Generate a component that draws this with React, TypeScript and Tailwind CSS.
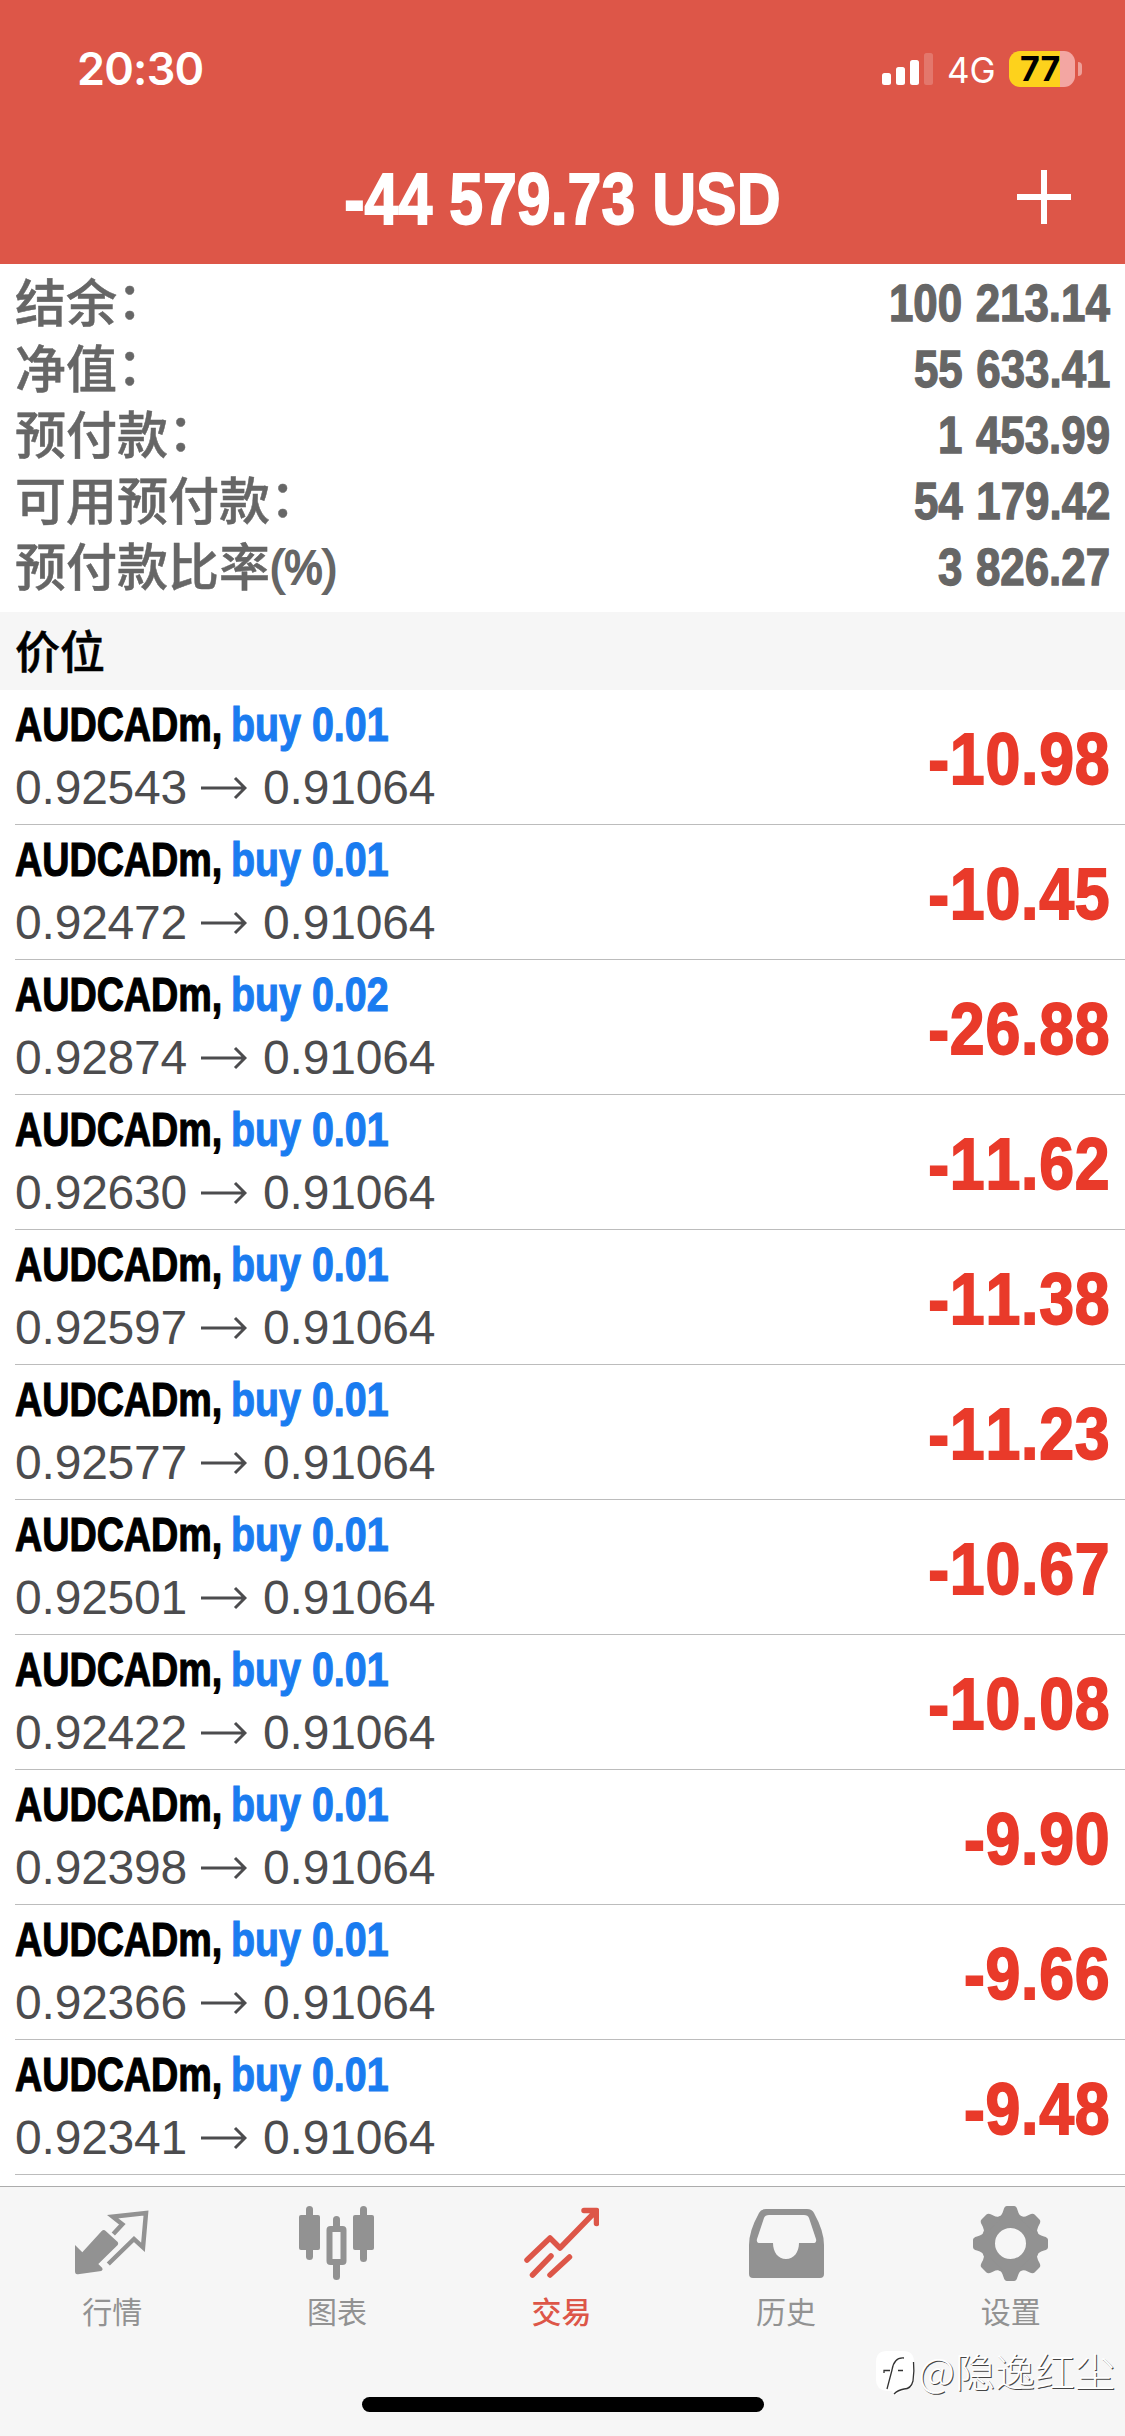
import type { ReactNode } from "react";

const summary = [
  { label: "结余", suffix: "：", value: "100 213.14" },
  { label: "净值", suffix: "：", value: "55 633.41" },
  { label: "预付款", suffix: "：", value: "1 453.99" },
  { label: "可用预付款", suffix: "：", value: "54 179.42" },
  { label: "预付款比率", suffix: "(%)", value: "3 826.27" },
];

const positions = [
  { volume: "0.01", open: "0.92543", profit: "-10.98" },
  { volume: "0.01", open: "0.92472", profit: "-10.45" },
  { volume: "0.02", open: "0.92874", profit: "-26.88" },
  { volume: "0.01", open: "0.92630", profit: "-11.62" },
  { volume: "0.01", open: "0.92597", profit: "-11.38" },
  { volume: "0.01", open: "0.92577", profit: "-11.23" },
  { volume: "0.01", open: "0.92501", profit: "-10.67" },
  { volume: "0.01", open: "0.92422", profit: "-10.08" },
  { volume: "0.01", open: "0.92398", profit: "-9.90" },
  { volume: "0.01", open: "0.92366", profit: "-9.66" },
  { volume: "0.01", open: "0.92341", profit: "-9.48" },
];

const StatusBar = () => (
  <div className="flex h-[138px] items-start justify-between pr-[43px] pl-[77px] font-['Inter',sans-serif]">
    <span className="mt-[41px] text-[45px] leading-[56px] font-semibold tracking-[-0.8px]">
      20:30
    </span>
    <div className="mt-[51px] flex h-9 items-center">
      <svg width="51" height="36" viewBox="0 0 51 36" fill="#fff">
        <rect x="0" y="22" width="9" height="12" rx="2.5" />
        <rect x="14" y="16" width="9" height="18" rx="2.5" />
        <rect x="28" y="9" width="9" height="25" rx="2.5" />
        <rect x="42" y="2" width="9" height="32" rx="2.5" opacity="0.2" />
      </svg>
      <span className="mt-px ml-[14px] w-[62px] text-[35px] leading-9">4G</span>
      <div className="flex h-9 w-[66px] items-center rounded-[11px] bg-linear-to-r from-[#fdd21c] from-77% to-[#f3a6a2] to-77% pl-[11px]">
        <span className="text-[34px] leading-9 font-bold text-black">77</span>
      </div>
      <div className="ml-[3px] h-[14px] w-1 rounded-r-full bg-[#ee9f98]" />
    </div>
  </div>
);

const Header = () => (
  <header className="h-[264px] bg-[#dd5648] text-white">
    <StatusBar />
    <div className="grid h-[126px] grid-cols-[108px_1fr_108px] items-start">
      <div />
      <h1 className="mt-[21px] origin-center scale-x-[0.845] text-center text-[72px] leading-[80px] font-bold whitespace-nowrap [-webkit-text-stroke:1.8px_#fff]">
        -44 579.73 USD
      </h1>
      <svg className="mt-8" width="54" height="54" viewBox="0 0 54 54">
        <path d="M27 0v54M0 27h54" stroke="#fff" strokeWidth="6" />
      </svg>
    </div>
  </header>
);

const Summary = () => (
  <section className="px-[15px] pt-1.5 pb-3 text-[#666]">
    {summary.map((s) => (
      <div key={s.label} className="flex h-[66px] items-start justify-between">
        <div className="-mt-[3px] flex font-['Noto_Sans_CJK_SC',sans-serif] text-[51px] leading-[66px] font-medium [-webkit-text-stroke:0.5px_#666]">
          <span>{s.label}</span>
          {s.suffix === "(%)" ? (
            <span className="mt-[3px] origin-left scale-x-[0.88] font-['Liberation_Sans',sans-serif] text-[49px] [-webkit-text-stroke:2px_#666]">
              {s.suffix}
            </span>
          ) : (
            <span className="-mt-[3px]">{s.suffix}</span>
          )}
        </div>
        <span className="mt-px origin-right scale-x-[0.86] text-[51px] leading-[66px] font-bold [word-spacing:0.03em] [font-kerning:none] [-webkit-text-stroke:1.3px_#666]">
          {s.value}
        </span>
      </div>
    ))}
  </section>
);

const PositionRow = ({ volume, open, profit }: (typeof positions)[number]) => (
  <li className="ml-[15px] flex h-[135px] items-center justify-between border-b border-[#bcbcbc] pr-[15px]">
    <div className="flex h-full flex-col items-start">
      <div className="mt-[7px] flex h-[56px] items-start text-[48px] leading-[56px] font-bold whitespace-nowrap [font-kerning:none]">
        <span className="w-[216px] origin-left scale-x-[0.785] text-black [-webkit-text-stroke:1.2px_#000]">
          AUDCADm,
        </span>
        <span className="origin-left scale-x-[0.82] text-[#1a7cf0] [-webkit-text-stroke:1.2px_#1a7cf0]">
          buy {volume}
        </span>
      </div>
      <div className="mt-[7px] flex items-center text-[48px] leading-[56px] text-[#4c4c4e]">
        <span className="tracking-[-0.2px]">{open}</span>
        <svg className="mr-[16px] ml-[14px]" width="46" height="24" viewBox="0 0 46 24">
          <path d="M0 12h44M34 2l10 10-10 10" fill="none" stroke="#4c4c4e" strokeWidth="3" />
        </svg>
        <span className="tracking-[-0.2px]">0.91064</span>
      </div>
    </div>
    <span className="mt-[3px] origin-right scale-x-[0.87] text-[72px] leading-[80px] font-bold tracking-[0.012em] text-[#e93a2a] [font-kerning:none] [-webkit-text-stroke:1.8px_#e93a2a]">
      {profit}
    </span>
  </li>
);

const QuotesIcon = () => (
  <svg width="75" height="81" viewBox="1 0 75 81">
    <path
      d="M1 39l7.300 7.300L27.700 25q2-2 4 0l12 11q1 1.300 0 3L24.300 58l4 4q1 2-1 3L4 68.300q-3 .500-3-3z"
      fill="#929292"
    />
    <path
      d="M39.300 28l9-9.700-9.600-7.600L72 7l-3 34.300L60 33 34.300 58"
      fill="none"
      stroke="#929292"
      strokeWidth="4.500"
    />
  </svg>
);

const ChartIcon = () => (
  <svg width="75" height="81" viewBox="0 0 75 81" fill="#929292">
    <rect x="0" y="9" width="21" height="35" rx="2" />
    <rect x="7" y="0" width="7" height="54" rx="3.5" />
    <rect x="54" y="9" width="21" height="35" rx="2" />
    <rect x="61" y="0" width="7" height="56" rx="3.5" />
    <rect x="34" y="10" width="7" height="14" rx="3.5" />
    <rect x="34" y="54" width="7" height="20" rx="3.5" />
    <rect x="30.500" y="23" width="14" height="33" rx="1" fill="none" stroke="#929292" strokeWidth="6" />
  </svg>
);

const TradeIcon = () => (
  <svg width="75" height="81" viewBox="0 0 75 81">
    <path
      d="M3 54l23-22 10 10L72 5M60 4.500h12.500v13M8.500 69L27 50M26 69l19.500-18"
      fill="none"
      stroke="#dd5648"
      strokeWidth="5.500"
      strokeLinecap="round"
      strokeLinejoin="round"
    />
  </svg>
);

const HistoryIcon = () => (
  <svg width="75" height="81" viewBox="0 0 75 81">
    <path
      fillRule="evenodd"
      fill="#929292"
      d="M17 3h41q5 0 7 4 10 18 10 32v29q0 4-4 4H4q-4 0-4-4V39Q0 25 10 7q2-4 7-4zm3 6q-4 0-5 3L8 33q-1 4 3 4h13c0 9 5 16 13 16s13-7 13-16h14q4 0 3-4L60 12q-1-3-5-3z"
    />
  </svg>
);

const toothAngles = [0, 45, 90, 135, 180, 225, 270, 315];

const SettingsIcon = () => (
  <svg width="75" height="81" viewBox="0 0 75 81">
    <circle cx="37.500" cy="37.500" r="22.500" fill="none" stroke="#929292" strokeWidth="14" />
    {toothAngles.map((angle) => (
      <path
        key={angle}
        d="M24 13q5-3 6.500-9Q31.500 0 34 0h7q2.500 0 3.500 4 1.500 6 6.500 9z"
        fill="#929292"
        transform={`rotate(${angle} 37.5 37.5)`}
      />
    ))}
  </svg>
);

const tabs: { label: string; icon: ReactNode; active?: boolean }[] = [
  { label: "行情", icon: <QuotesIcon /> },
  { label: "图表", icon: <ChartIcon /> },
  { label: "交易", icon: <TradeIcon />, active: true },
  { label: "历史", icon: <HistoryIcon /> },
  { label: "设置", icon: <SettingsIcon /> },
];

const TabBar = () => (
  <nav className="relative mt-[11px] flex h-[250px] flex-col items-center border-t border-[#acacac] bg-[#f6f6f6]">
    <div className="grid h-[210px] w-full grid-cols-5 pt-[19px] pr-[2px]">
      {tabs.map((tab) => (
        <div key={tab.label} className="flex flex-col items-center">
          {tab.icon}
          <span
            className={`mt-[3px] font-['Noto_Sans_CJK_SC',sans-serif] text-[30px] leading-10 ${
              tab.active ? "font-medium text-[#dd5648]" : "text-[#929292]"
            }`}
          >
            {tab.label}
          </span>
        </div>
      ))}
    </div>
    <div className="h-[15px] w-[402px] rounded-full bg-black" />
    <div className="absolute top-[152px] right-[10px] flex items-center text-white">
      <svg className="mt-3" width="42" height="50" viewBox="0 0 42 50">
        <path d="M11 0h16q11 0 11 11v18q0 9-9 10l-11 5-2-4h-5Q0 39 0 29V11Q0 0 11 0z" fill="#fff" />
        <path
          d="M28 7q-10-1-12 12l-5 19M8 22v-2.500h6M22 19.500h5M37.500 11q1 9-.500 19-2 8-9 8-6 1-10 5"
          fill="none"
          stroke="#333"
          strokeWidth="1.300"
        />
      </svg>
      <span className="ml-px font-['Noto_Sans_CJK_SC',sans-serif] text-[40px] leading-[50px] font-light [text-shadow:1px_1px_0_#444]">
        @隐逸红尘
      </span>
    </div>
  </nav>
);

const App = () => {
  return (
    <div className="h-[2436px] w-[1125px] overflow-hidden bg-white font-['Liberation_Sans',Arial,sans-serif]">
      <Header />
      <Summary />
      <h2 className="h-[78px] bg-[#f6f6f6] pl-[15px] font-['Noto_Sans_CJK_SC',sans-serif] text-[45px] leading-[75px] font-medium text-black [-webkit-text-stroke:0.5px_#000]">
        价位
      </h2>
      <ul>
        {positions.map((p) => (
          <PositionRow key={p.open} {...p} />
        ))}
      </ul>
      <TabBar />
    </div>
  );
};

export default App;
